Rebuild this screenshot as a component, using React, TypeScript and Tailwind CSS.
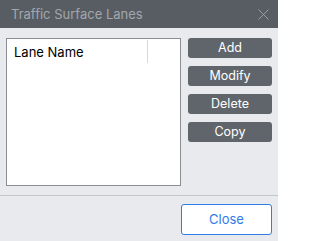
import { X } from "lucide-react"

export default function App() {
  const actions = ["Add", "Modify", "Delete", "Copy"]

  return (
    <div
      className="w-[278px] h-[241px] bg-[#e9eaee] flex flex-col overflow-hidden"
      style={{ fontFamily: "Inter, 'Liberation Sans', sans-serif" }}
    >
      {/* Title bar */}
      <div className="h-[28px] shrink-0 bg-[#585d63] flex items-center justify-between pl-[11px] pr-[5px]">
        <span className="text-[13px] text-[#a3a7ad] leading-none">Traffic Surface Lanes</span>
        <X className="w-[19px] h-[19px] text-[#a3a7ad]" strokeWidth={1.1} />
      </div>

      {/* Body */}
      <div className="flex px-[6px] pt-[10px] gap-[7px]">
        <div className="w-[175px] h-[148px] border border-[#8a8d92] bg-white">
          <div className="flex h-[24px] mt-[1px]">
            <div className="w-[140px] pl-[7px] pt-[3px] text-[13px] text-black leading-[18px]">Lane Name</div>
            <div className="w-px h-[23px] bg-[#d6d8db]" />
          </div>
        </div>
        <div className="w-[84px] flex flex-col gap-[8px]">
          {actions.map((a) => (
            <button
              key={a}
              className="h-[20px] rounded-[3px] bg-[#60656b] text-white text-[12.5px] leading-none flex items-center justify-center"
            >
              {a}
            </button>
          ))}
        </div>
      </div>

      {/* Footer */}
      <div className="mt-[9px] border-t border-[#c3c7cc] flex justify-end pt-[8px] pr-[6px]">
        <button className="w-[91px] h-[31px] rounded-[3px] border border-[#2f7bea] bg-white text-[#2f7bea] text-[13px] leading-none">
          Close
        </button>
      </div>
    </div>
  )
}
